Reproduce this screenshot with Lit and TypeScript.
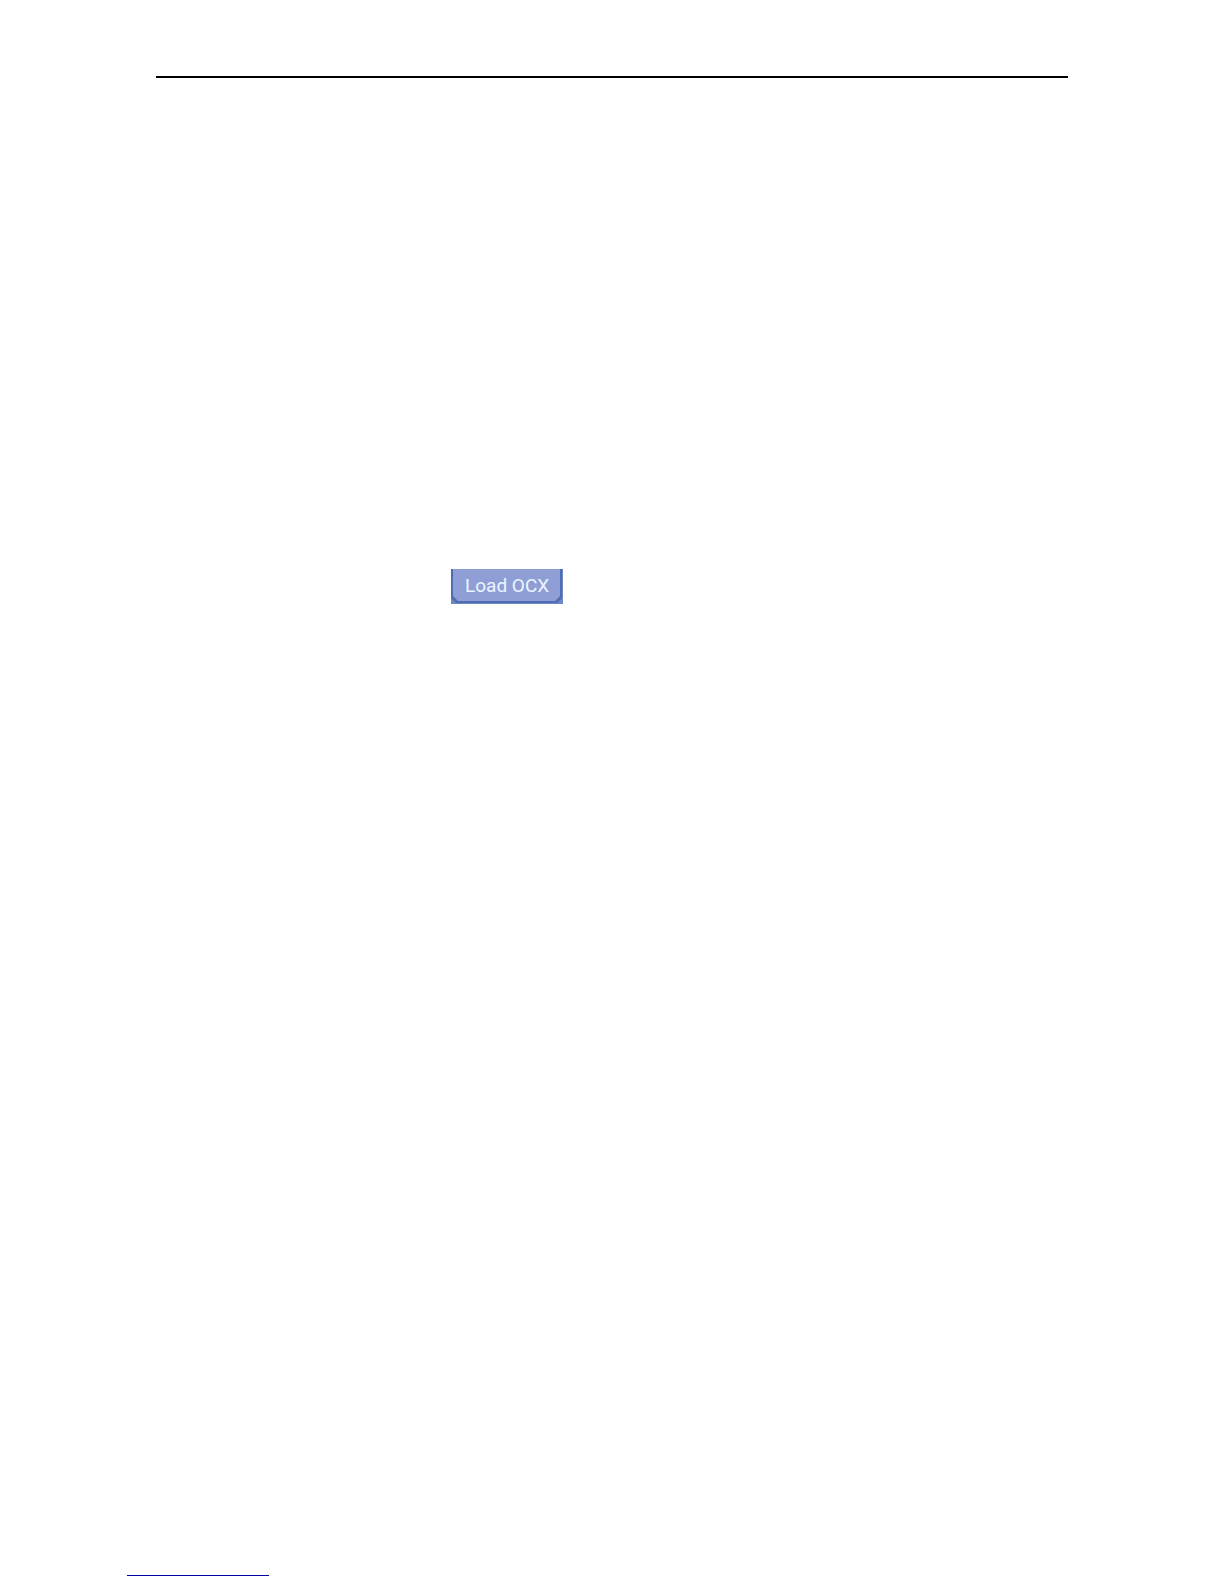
import { LitElement, html, css } from "lit";
import { customElement } from "lit/decorators.js";

@customElement("load-button")
class LoadButton extends LitElement {
  static styles = css`
    :host {
      display: inline-block;
    }
    .button {
      display: block;
      position: relative;
      box-sizing: border-box;
      margin: 0;
      padding: 6px 14px 7px;
      border: 0;
      background: #6c88c6;
      color: #eaf5ff;
      font: 19px/22px Roboto, "Liberation Sans", sans-serif;
      white-space: nowrap;
      cursor: pointer;
    }
    .edge,
    .face {
      position: absolute;
      clip-path: polygon(
        0 0,
        100% 0,
        100% calc(100% - 5px),
        calc(100% - 5px) 100%,
        5px 100%,
        0 calc(100% - 5px)
      );
    }
    .edge {
      inset: 0 1px 1px 0;
      background: #4f6cb5;
    }
    .face {
      inset: 0 3px 3px 2px;
      background: #8f9fd5;
    }
    .label {
      position: relative;
    }
  `;

  render() {
    return html`<button class="button" type="button">
      <span class="edge"></span><span class="face"></span
      ><span class="label">Load OCX</span>
    </button>`;
  }
}

@customElement("app-root")
class AppRoot extends LitElement {
  static styles = css`
    :host {
      display: block;
      background: #fff;
    }
    .page {
      display: flex;
      flex-direction: column;
      box-sizing: border-box;
      min-height: 100vh;
      padding: 76px 156px 8px 127px;
    }
    .rule {
      width: auto;
      height: 2px;
      margin: 0 0 0 29px;
      border: 0;
      background: #000;
    }
    .body {
      flex: 1;
      padding: 491px 0 0 324px;
    }
    .link-rule {
      width: 142px;
      height: 1px;
      background: #0000a0;
    }
  `;

  render() {
    return html`
      <div class="page">
        <hr class="rule" />
        <main class="body"><load-button></load-button></main>
        <footer class="link-rule"></footer>
      </div>
    `;
  }
}
